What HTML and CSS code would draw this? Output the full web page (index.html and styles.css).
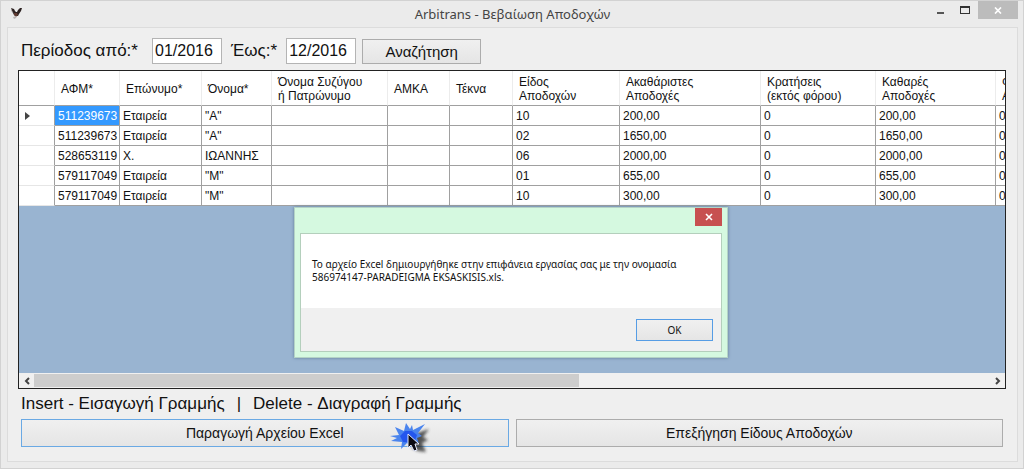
FILE: index.html
```html
<!DOCTYPE html>
<html lang="el">
<head>
<meta charset="utf-8">
<meta name="viewport" content="width=device-width, initial-scale=1">
<title>Arbitrans - Βεβαίωση Αποδοχών</title>
<link rel="stylesheet" href="styles.css">
</head>
<body>
<div class="window">
  <header class="titlebar">
    <svg class="app-icon" viewBox="0 0 14 14" aria-hidden="true">
      <path d="M1 2L4 3L5 5L6 6L7 6L8 4L10 2L12 2L11 5L9 8L8 10L6 10L4 9L3 7Z" fill="#2c2120"/>
      <path d="M4 7L7 7L8 9L6 11L4 9Z" fill="#5f3a30"/>
      <path d="M3 11L7 10L6 12L4 13Z" fill="#b9b4b4"/>
      <path d="M1 3L3 6L4 7L2 6Z" fill="#77706f"/>
    </svg>
    <h1 class="title">Arbitrans - Βεβαίωση Αποδοχών</h1>
    <div class="window-buttons">
      <button class="win-btn" type="button" aria-label="Ελαχιστοποίηση">
        <svg width="8" height="10" viewBox="0 0 8 10"><path d="M0 7h7v2H0z" fill="#555"/></svg>
      </button>
      <button class="win-btn" type="button" aria-label="Μεγιστοποίηση">
        <svg width="10" height="8" viewBox="0 0 10 8"><path d="M0 0h10v8H0zM1 2v5h8V2z" fill="#333" fill-rule="evenodd"/></svg>
      </button>
      <button class="win-btn win-close" type="button" aria-label="Κλείσιμο">
        <svg width="8" height="7" viewBox="0 0 8 7"><path d="M1 0.500L7 6.500M7 0.500L1 6.500" stroke="#fff" stroke-width="1.700"/></svg>
      </button>
    </div>
  </header>

  <main class="client">
    <form class="search">
      <label class="label label-from" for="from">Περίοδος από:*</label>
      <input class="date" id="from" type="text" value="01/2016">
      <label class="label" for="to">Έως:*</label>
      <input class="date" id="to" type="text" value="12/2016">
      <button class="btn btn-search" type="button">Αναζήτηση</button>
    </form>

    <section class="grid">
      <div class="grid-view">
        <table class="records">
          <colgroup>
            <col class="c-head"><col class="c-afm"><col class="c-last"><col class="c-first"><col class="c-spouse">
            <col class="c-amka"><col class="c-kids"><col class="c-type"><col class="c-gross"><col class="c-held">
            <col class="c-net"><col class="c-tax">
          </colgroup>
          <thead>
            <tr>
              <th></th><th>ΑΦΜ*</th><th>Επώνυμο*</th><th>Όνομα*</th><th>Όνομα Συζύγου<br>ή Πατρώνυμο</th>
              <th>ΑΜΚΑ</th><th>Τέκνα</th><th>Είδος<br>Αποδοχών</th><th>Ακαθάριστες<br>Αποδοχές</th>
              <th>Κρατήσεις<br>(εκτός φόρου)</th><th>Καθαρές<br>Αποδοχές</th><th>Φ<br>Α</th>
            </tr>
          </thead>
          <tbody>
            <tr><td class="marker"><svg width="5" height="8" viewBox="0 0 5 8"><path d="M0 0L5 4L0 8z" fill="#444"/></svg></td><td class="selected">511239673</td><td>Εταιρεία</td><td>"Α"</td><td></td><td></td><td></td><td>10</td><td>200,00</td><td>0</td><td>200,00</td><td>0</td></tr>
            <tr><td class="marker"></td><td>511239673</td><td>Εταιρεία</td><td>"Α"</td><td></td><td></td><td></td><td>02</td><td>1650,00</td><td>0</td><td>1650,00</td><td>0</td></tr>
            <tr><td class="marker"></td><td>528653119</td><td>Χ.</td><td>ΙΩΑΝΝΗΣ</td><td></td><td></td><td></td><td>06</td><td>2000,00</td><td>0</td><td>2000,00</td><td>0</td></tr>
            <tr><td class="marker"></td><td>579117049</td><td>Εταιρεία</td><td>"Μ"</td><td></td><td></td><td></td><td>01</td><td>655,00</td><td>0</td><td>655,00</td><td>0</td></tr>
            <tr><td class="marker"></td><td>579117049</td><td>Εταιρεία</td><td>"Μ"</td><td></td><td></td><td></td><td>10</td><td>300,00</td><td>0</td><td>300,00</td><td>0</td></tr>
          </tbody>
        </table>
      </div>
      <div class="scrollbar">
        <button class="arrow" type="button" aria-label="Κύλιση αριστερά"><svg width="6" height="8" viewBox="0 0 6 8"><path d="M5 1L2 4L5 7" fill="none" stroke="#444" stroke-width="2"/></svg></button>
        <div class="track"><div class="thumb"></div></div>
        <button class="arrow" type="button" aria-label="Κύλιση δεξιά"><svg width="6" height="8" viewBox="0 0 6 8"><path d="M1 1L4 4L1 7" fill="none" stroke="#444" stroke-width="2"/></svg></button>
      </div>

      <div class="dialog" role="dialog" aria-describedby="message">
        <div class="dialog-bar">
          <button class="dialog-close" type="button" aria-label="Κλείσιμο"><svg width="8" height="8" viewBox="0 0 8 8"><path d="M1 1L7 7M7 1L1 7" stroke="#fff" stroke-width="1.600"/></svg></button>
        </div>
        <div class="dialog-body">
          <p class="message" id="message">Το αρχείο Excel δημιουργήθηκε στην επιφάνεια εργασίας σας με την ονομασία<br>586974147-PARADEIGMA EKSASKISIS.xls.</p>
          <div class="dialog-actions"><button class="btn btn-ok" type="button">OK</button></div>
        </div>
      </div>
    </section>

    <p class="hints"><span>Insert - Εισαγωγή Γραμμής</span><span>|</span><span>Delete - Διαγραφή Γραμμής</span></p>

    <div class="actions">
      <button class="btn btn-main focused" type="button">Παραγωγή Αρχείου Excel
        <svg class="click" width="50" height="40" viewBox="0 0 50 40" aria-hidden="true">
          <defs><filter id="soft" x="-50%" y="-50%" width="200%" height="200%"><feGaussianBlur stdDeviation="1.800"/></filter></defs>
          <path d="M26 16L43 10L37 18L42 21L36 24L40 33L32 32L26 29Z" fill="#222" opacity=".75" filter="url(#soft)"/>
          <path d="M4 17L13 16L9 8L18 12L20 4L24 10L26 6L27 11L39 5L32 14L36 17L31 19L33 25L26 23L25 28L21 24L15 30L16 23L5 22L11 19Z" fill="#4a84ee"/>
          <path d="M14 17L19 12L26 12L31 16L28 24L17 23Z" fill="#2456ed"/>
          <path d="M22 15L22 29L25 26L28 32L31 31L29 25L33 25Z" fill="#0a0a14" stroke="#e6ecff" stroke-width="1"/>
        </svg>
      </button>
      <button class="btn btn-main" type="button">Επεξήγηση Είδους Αποδοχών</button>
    </div>
  </main>
</div>
</body>
</html>
```
FILE: styles.css
```css
* { box-sizing: border-box; }

body {
  margin: 0;
  background: #ebebeb;
  color: #111;
  font-family: "Liberation Sans", Arial, sans-serif;
}

button, input { font: inherit; color: inherit; }
svg { display: block; }

.window {
  display: flex;
  flex-direction: column;
  min-height: 100vh;
  padding: 0 5px 6px 6px;
  border: 1px solid #d2d2d2;
  background: #ebebeb;
}

.titlebar {
  display: grid;
  grid-template-columns: 100px 1fr 100px;
  height: 26px;
}

.app-icon { width: 14px; height: 14px; margin: 5px 0 0 3px; }

.title {
  margin: 0;
  font: 400 13px/26px "Noto Sans", sans-serif;
  text-align: center;
  color: #444;
}

.window-buttons { display: flex; justify-content: flex-end; }

.win-btn {
  display: flex;
  align-items: center;
  justify-content: center;
  width: 24px;
  height: 18px;
  padding: 0;
  border: 0;
  background: none;
}

.win-close { width: 40px; margin-left: 1px; background: #bcbcbc; }

.client {
  flex: 1;
  display: flex;
  flex-direction: column;
  padding: 10px 11px 14px 10px;
  border: 1px solid #dcdcdc;
  background: #efefef;
}

.search {
  display: flex;
  align-items: center;
  height: 26px;
  margin-bottom: 6px;
  padding-left: 3px;
}

.label { margin-right: 9px; font-size: 17px; line-height: 26px; }
.label-from { min-width: 122px; }

.date {
  width: 70px;
  height: 26px;
  margin-right: 9px;
  padding: 0 2px;
  border: 1px solid #b4b4b4;
  background: #fff;
  font-size: 16px;
}

.btn {
  border: 1px solid #acacac;
  padding: 0;
  background: linear-gradient(#f0f0f0, #e5e5e5);
}

.btn-search { width: 119px; height: 25px; margin-left: -3px; font-size: 15px; }

.grid {
  position: relative;
  flex: 1;
  display: flex;
  flex-direction: column;
  border: 1px solid #222;
  background: #99b4d1;
}

.grid-view { flex: 1; overflow: hidden; }

.records {
  width: 1073px;
  table-layout: fixed;
  border-collapse: separate;
  border-spacing: 0;
  background: #fff;
  font-size: 12px;
}

.c-head { width: 36px; }
.c-afm { width: 65px; }
.c-last { width: 82px; }
.c-first { width: 70px; }
.c-spouse { width: 116px; }
.c-amka { width: 62px; }
.c-kids { width: 63px; }
.c-type { width: 107px; }
.c-gross { width: 141px; }
.c-held { width: 115px; }
.c-net { width: 120px; }
.c-tax { width: 96px; }

.records th {
  height: 35px;
  padding: 2px 0 0 6px;
  border-right: 1px solid #ececec;
  border-bottom: 1px solid #a0a0a0;
  font-weight: 400;
  line-height: 14px;
  text-align: left;
  white-space: nowrap;
}

.records td {
  height: 20px;
  padding: 1px 0 0 3px;
  border-right: 1px solid #a0a0a0;
  border-bottom: 1px solid #a0a0a0;
  line-height: 18px;
  white-space: nowrap;
}

.records .marker { padding-left: 6px; border-bottom-color: #e6e6e6; }
.records .selected { background: #3399ff; color: #fff; }

.scrollbar { display: flex; height: 15px; background: #f0f0f0; }

.arrow {
  display: flex;
  align-items: center;
  justify-content: center;
  width: 15px;
  padding: 0;
  border: 0;
  background: none;
}

.track { flex: 1; padding: 1px 0; }
.thumb { width: 57%; height: 100%; background: #cdcdcd; }

.dialog {
  position: absolute;
  top: 136px;
  left: 0;
  right: 2px;
  width: 434px;
  margin: 0 auto;
  padding: 0 5px 5px;
  border: 1px solid #b4d3c6;
  background: #d5f9e0;
  box-shadow: 0 0 3px #5f7d96;
}

.dialog-bar { display: flex; justify-content: flex-end; height: 25px; }

.dialog-close {
  display: flex;
  align-items: center;
  justify-content: center;
  width: 27px;
  height: 18px;
  padding: 0;
  border: 0;
  background: #c75050;
}

.dialog-body { border: 1px solid #b4cfbc; background: #fff; font-family: "Noto Sans", sans-serif; font-size: 10px; }
.message { margin: 0; padding: 24px 11px; line-height: 13px; white-space: nowrap; }
.dialog-actions { display: flex; justify-content: flex-end; padding: 11px 8px 10px; background: #f0f0f0; }
.btn-ok { width: 77px; height: 22px; border-color: #569de5; }

.hints {
  display: flex;
  gap: 12px;
  margin: 0;
  padding: 4px 3px;
  font-size: 17px;
  line-height: 22px;
}

.actions { display: grid; grid-template-columns: 1fr 1fr; gap: 7px; padding: 0 3px; }
.btn-main { position: relative; height: 28px; font-size: 14px; }
.focused { border-color: #6aa9e4; }

.click { position: absolute; top: -1px; right: 72px; }
```
